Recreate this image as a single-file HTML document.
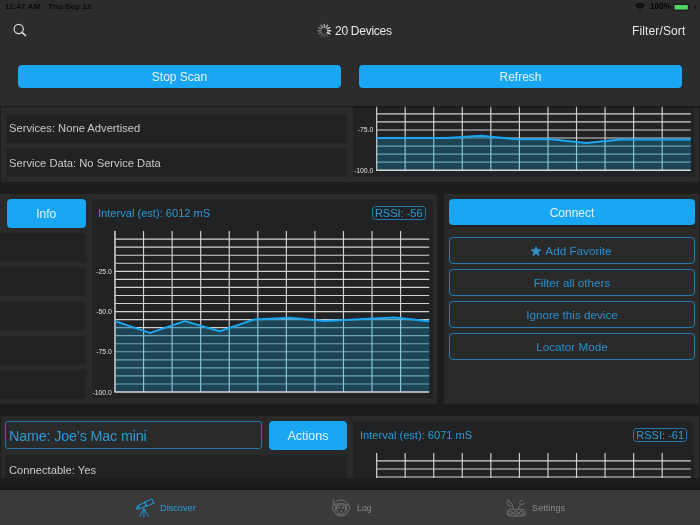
<!DOCTYPE html>
<html><head><meta charset="utf-8"><style>
*{margin:0;padding:0;box-sizing:border-box}
html,body{width:700px;height:525px;overflow:hidden;background:#1d1d1e;font-family:"Liberation Sans",sans-serif}
.a{position:absolute}
.btn{position:absolute;background:#19a6f3;border-radius:4px;box-shadow:0 0 1px rgba(0,0,0,.6);color:#e4f4ff;text-align:center;font-size:12px;will-change:transform}
.ob{position:absolute;border:1.5px solid #2a7cb0;border-radius:4px;color:#2b90cc;text-align:center;font-size:11.7px;line-height:26.8px;will-change:transform}
.cell{position:absolute;background:#212224;border-radius:3px}
.t{position:absolute;white-space:nowrap;color:#c9c9c9;will-change:transform}
svg{will-change:transform}
svg text{font-family:"Liberation Sans",sans-serif}
</style></head><body>
<!-- top card -->
<div class="a" style="left:1px;top:-29px;width:698px;height:210.5px;background:#2a2a2a"></div>
<div class="cell" style="left:6px;top:113.8px;width:341px;height:28.8px"></div>
<div class="cell" style="left:6px;top:148px;width:341px;height:29px"></div>
<div class="t" style="left:8.6px;top:122.2px;font-size:11.2px">Services: None Advertised</div>
<div class="t" style="left:8.6px;top:157px;font-size:11.2px">Service Data: No Service Data</div>
<div class="cell" style="left:353.2px;top:-23px;width:340.5px;height:199.5px"></div>
<svg class="a" style="left:0;top:0" width="700" height="525"><clipPath id="c3769"><polygon points="376.60,170.20 376.60,138.10 411.51,138.10 446.42,138.10 481.33,135.70 516.24,139.30 551.16,139.30 586.07,143.00 620.98,139.50 655.89,139.50 690.80,139.50 690.80,170.20"/></clipPath><path d="M376.60 9.30V170.20M405.16 9.30V170.20M433.72 9.30V170.20M462.28 9.30V170.20M490.84 9.30V170.20M519.40 9.30V170.20M547.96 9.30V170.20M576.52 9.30V170.20M605.08 9.30V170.20M633.64 9.30V170.20M662.20 9.30V170.20M376.60 113.88H690.80M376.60 121.93H690.80M376.60 129.97H690.80M376.60 138.02H690.80M376.60 146.06H690.80M376.60 154.11H690.80M376.60 162.16H690.80" stroke="#d2d2d2" stroke-width="1.15" fill="none"/><g clip-path="url(#c3769)"><rect x="374.6" y="9.3" width="318.2" height="162.9" fill="#1d4556"/><path d="M376.60 17.34H690.80M376.60 25.39H690.80M376.60 33.44H690.80M376.60 41.48H690.80M376.60 49.53H690.80M376.60 57.57H690.80M376.60 65.61H690.80M376.60 73.66H690.80M376.60 81.70H690.80M376.60 89.75H690.80M376.60 97.80H690.80M376.60 105.84H690.80M376.60 113.88H690.80M376.60 121.93H690.80M376.60 129.97H690.80M376.60 138.02H690.80M376.60 146.06H690.80M376.60 154.11H690.80M376.60 162.16H690.80" stroke="#6ba2b6" stroke-width="1.15" fill="none"/><path d="M376.60 9.30V170.20M405.16 9.30V170.20M433.72 9.30V170.20M462.28 9.30V170.20M490.84 9.30V170.20M519.40 9.30V170.20M547.96 9.30V170.20M576.52 9.30V170.20M605.08 9.30V170.20M633.64 9.30V170.20M662.20 9.30V170.20" stroke="#8cc6da" stroke-width="1.15" fill="none"/></g><path d="M376.00 170.20H690.80" stroke="#d8d8d8" stroke-width="1.4"/><path d="M376.60 107.00V170.20" stroke="#c4c4c4" stroke-width="1.15"/><polyline points="376.60,138.10 411.51,138.10 446.42,138.10 481.33,135.70 516.24,139.30 551.16,139.30 586.07,143.00 620.98,139.50 655.89,139.50 690.80,139.50" stroke="#1ba6f2" stroke-width="2" fill="none" stroke-linejoin="round"/><text x="373.30" y="52.03" text-anchor="end" font-size="6.8" fill="#e2e2e2">-25.0</text><text x="373.30" y="92.25" text-anchor="end" font-size="6.8" fill="#e2e2e2">-50.0</text><text x="373.30" y="132.48" text-anchor="end" font-size="6.8" fill="#e2e2e2">-75.0</text><text x="373.30" y="172.70" text-anchor="end" font-size="6.8" fill="#e2e2e2">-100.0</text></svg>

<!-- middle card -->
<div class="a" style="left:0;top:193.6px;width:437.2px;height:210.2px;background:#2a2a2a"></div>
<div class="a" style="left:443.7px;top:193.6px;width:255.2px;height:210.2px;background:#2a2a2a"></div>
<div class="btn" style="left:7px;top:198.7px;width:78.5px;height:29px;line-height:30.6px;font-size:12px">Info</div>
<div class="cell" style="left:-4px;top:233px;width:89.5px;height:28.5px"></div>
<div class="cell" style="left:-4px;top:267.3px;width:89.5px;height:28.5px"></div>
<div class="cell" style="left:-4px;top:301.7px;width:89.5px;height:28.5px"></div>
<div class="cell" style="left:-4px;top:336px;width:89.5px;height:28.5px"></div>
<div class="cell" style="left:-4px;top:370px;width:89.5px;height:28.5px"></div>
<div class="cell" style="left:91.8px;top:199.2px;width:341px;height:199px"></div>
<div class="t" style="left:98.3px;top:206.8px;font-size:11.1px;color:#2b9bd8">Interval (est): 6012 mS</div>
<div class="a" style="left:372px;top:205.9px;width:54px;height:14px;border:1.5px solid #2778aa;border-radius:3.5px"></div>
<div class="t" style="left:372.3px;top:207px;width:53.5px;text-align:center;font-size:11px;color:#2b9bd8">RSSI: -56</div>
<svg class="a" style="left:0;top:0" width="700" height="525"><clipPath id="c115231"><polygon points="115.00,392.00 115.00,321.10 149.91,332.90 184.82,321.10 219.73,331.20 254.64,319.40 289.56,317.70 324.47,320.90 359.38,319.30 394.29,317.60 429.20,321.20 429.20,392.00"/></clipPath><path d="M115.00 231.10V392.00M143.56 231.10V392.00M172.12 231.10V392.00M200.68 231.10V392.00M229.24 231.10V392.00M257.80 231.10V392.00M286.36 231.10V392.00M314.92 231.10V392.00M343.48 231.10V392.00M372.04 231.10V392.00M400.60 231.10V392.00M115.00 239.14H429.20M115.00 247.19H429.20M115.00 255.23H429.20M115.00 263.28H429.20M115.00 271.32H429.20M115.00 279.37H429.20M115.00 287.41H429.20M115.00 295.46H429.20M115.00 303.50H429.20M115.00 311.55H429.20M115.00 319.60H429.20M115.00 327.64H429.20M115.00 335.69H429.20M115.00 343.73H429.20M115.00 351.77H429.20M115.00 359.82H429.20M115.00 367.87H429.20M115.00 375.91H429.20M115.00 383.95H429.20" stroke="#d2d2d2" stroke-width="1.15" fill="none"/><g clip-path="url(#c115231)"><rect x="113" y="231.1" width="318.2" height="162.9" fill="#1d4556"/><path d="M115.00 239.14H429.20M115.00 247.19H429.20M115.00 255.23H429.20M115.00 263.28H429.20M115.00 271.32H429.20M115.00 279.37H429.20M115.00 287.41H429.20M115.00 295.46H429.20M115.00 303.50H429.20M115.00 311.55H429.20M115.00 319.60H429.20M115.00 327.64H429.20M115.00 335.69H429.20M115.00 343.73H429.20M115.00 351.77H429.20M115.00 359.82H429.20M115.00 367.87H429.20M115.00 375.91H429.20M115.00 383.95H429.20" stroke="#6ba2b6" stroke-width="1.15" fill="none"/><path d="M115.00 231.10V392.00M143.56 231.10V392.00M172.12 231.10V392.00M200.68 231.10V392.00M229.24 231.10V392.00M257.80 231.10V392.00M286.36 231.10V392.00M314.92 231.10V392.00M343.48 231.10V392.00M372.04 231.10V392.00M400.60 231.10V392.00" stroke="#8cc6da" stroke-width="1.15" fill="none"/></g><path d="M114.40 392.00H429.20" stroke="#d8d8d8" stroke-width="1.4"/><path d="M115.00 231.10V392.00" stroke="#c4c4c4" stroke-width="1.15"/><polyline points="115.00,321.10 149.91,332.90 184.82,321.10 219.73,331.20 254.64,319.40 289.56,317.70 324.47,320.90 359.38,319.30 394.29,317.60 429.20,321.20" stroke="#1ba6f2" stroke-width="2" fill="none" stroke-linejoin="round"/><text x="111.70" y="273.82" text-anchor="end" font-size="6.8" fill="#e2e2e2">-25.0</text><text x="111.70" y="314.05" text-anchor="end" font-size="6.8" fill="#e2e2e2">-50.0</text><text x="111.70" y="354.27" text-anchor="end" font-size="6.8" fill="#e2e2e2">-75.0</text><text x="111.70" y="394.50" text-anchor="end" font-size="6.8" fill="#e2e2e2">-100.0</text></svg>
<div class="btn" style="left:448.5px;top:199px;width:246px;height:26.4px;line-height:28px;box-shadow:0 1px 1.5px rgba(0,0,0,.35)">Connect</div>
<div class="ob" style="left:448.5px;top:237.3px;width:246px;height:27px;padding-left:13px">Add Favorite</div>
<svg class="a" style="left:0;top:0" width="700" height="525"><polygon points="536.00,245.40 537.53,249.30 541.71,249.55 538.47,252.20 539.53,256.25 536.00,254.00 532.47,256.25 533.53,252.20 530.29,249.55 534.47,249.30" fill="#2b90cc"/></svg>
<div class="ob" style="left:448.5px;top:269.3px;width:246px;height:27px">Filter all others</div>
<div class="ob" style="left:448.5px;top:301.3px;width:246px;height:27px">Ignore this device</div>
<div class="ob" style="left:448.5px;top:333.3px;width:246px;height:27px">Locator Mode</div>

<!-- bottom card -->
<div class="a" style="left:1px;top:415.6px;width:698px;height:62px;background:#2a2a2a"></div>
<div class="a" style="left:5.2px;top:420.6px;width:256.6px;height:28.6px;border:1.6px solid #2677aa;border-radius:3px"></div>
<div class="t" style="left:8.8px;top:427.7px;font-size:14.3px;letter-spacing:-0.14px;color:#2b9bd8">Name: Joe&#8217;s Mac mini</div>
<div class="btn" style="left:269px;top:421px;width:78px;height:28.8px;line-height:30.6px;font-size:12.5px">Actions</div>
<div class="cell" style="left:5.3px;top:455px;width:341.7px;height:30px"></div>
<div class="t" style="left:8.6px;top:464.3px;font-size:11.2px">Connectable: Yes</div>
<div class="cell" style="left:353.3px;top:421.4px;width:340.5px;height:60px"></div>
<div class="t" style="left:359.7px;top:429px;font-size:11.1px;color:#2b9bd8">Interval (est): 6071 mS</div>
<div class="a" style="left:633.1px;top:427.6px;width:54.4px;height:14.3px;border:1.5px solid #2778aa;border-radius:3.5px"></div>
<div class="t" style="left:633.1px;top:428.8px;width:54.4px;text-align:center;font-size:11px;color:#2b9bd8">RSSI: -61</div>
<svg class="a" style="left:0;top:0;clip-path:inset(0 0 47.5px 0)" width="700" height="525"><clipPath id="c376452"><polygon points="376.60,613.80 376.60,520.00 411.51,520.00 446.42,520.00 481.33,520.00 516.24,520.00 551.16,520.00 586.07,520.00 620.98,520.00 655.89,520.00 690.80,520.00 690.80,613.80"/></clipPath><path d="M376.60 452.90V613.80M405.16 452.90V613.80M433.72 452.90V613.80M462.28 452.90V613.80M490.84 452.90V613.80M519.40 452.90V613.80M547.96 452.90V613.80M576.52 452.90V613.80M605.08 452.90V613.80M633.64 452.90V613.80M662.20 452.90V613.80M376.60 460.94H690.80M376.60 468.99H690.80M376.60 477.03H690.80M376.60 485.08H690.80M376.60 493.12H690.80M376.60 501.17H690.80M376.60 509.21H690.80M376.60 517.26H690.80M376.60 525.30H690.80M376.60 533.35H690.80M376.60 541.39H690.80M376.60 549.44H690.80M376.60 557.49H690.80M376.60 565.53H690.80M376.60 573.57H690.80M376.60 581.62H690.80M376.60 589.66H690.80M376.60 597.71H690.80M376.60 605.75H690.80" stroke="#d2d2d2" stroke-width="1.15" fill="none"/><g clip-path="url(#c376452)"><rect x="374.6" y="452.9" width="318.2" height="162.9" fill="#1d4556"/><path d="M376.60 460.94H690.80M376.60 468.99H690.80M376.60 477.03H690.80M376.60 485.08H690.80M376.60 493.12H690.80M376.60 501.17H690.80M376.60 509.21H690.80M376.60 517.26H690.80M376.60 525.30H690.80M376.60 533.35H690.80M376.60 541.39H690.80M376.60 549.44H690.80M376.60 557.49H690.80M376.60 565.53H690.80M376.60 573.57H690.80M376.60 581.62H690.80M376.60 589.66H690.80M376.60 597.71H690.80M376.60 605.75H690.80" stroke="#6ba2b6" stroke-width="1.15" fill="none"/><path d="M376.60 452.90V613.80M405.16 452.90V613.80M433.72 452.90V613.80M462.28 452.90V613.80M490.84 452.90V613.80M519.40 452.90V613.80M547.96 452.90V613.80M576.52 452.90V613.80M605.08 452.90V613.80M633.64 452.90V613.80M662.20 452.90V613.80" stroke="#8cc6da" stroke-width="1.15" fill="none"/></g><path d="M376.00 613.80H690.80" stroke="#d8d8d8" stroke-width="1.4"/><path d="M376.60 452.90V613.80" stroke="#c4c4c4" stroke-width="1.15"/><polyline points="376.60,520.00 411.51,520.00 446.42,520.00 481.33,520.00 516.24,520.00 551.16,520.00 586.07,520.00 620.98,520.00 655.89,520.00 690.80,520.00" stroke="#1ba6f2" stroke-width="2" fill="none" stroke-linejoin="round"/></svg>
<div class="a" style="left:0;top:477.6px;width:700px;height:13px;background:linear-gradient(#1d1d1e 40%,#131313)"></div>

<!-- nav bar -->
<div class="a" style="left:0;top:0;width:700px;height:106.3px;background:#2c2c2c"></div>
<div class="a" style="left:0;top:105.8px;width:700px;height:2.6px;background:linear-gradient(#161616,rgba(22,22,22,0))"></div>
<div class="a" style="left:0;top:47.6px;width:700px;height:1px;background:#282828"></div>
<div class="t" style="left:5px;top:2.2px;letter-spacing:0.05px;font-size:8.1px;font-weight:bold;color:#0a0a0a">11:47 AM</div>
<div class="t" style="left:47.8px;top:2.2px;font-size:8.1px;font-weight:bold;color:#0a0a0a">Thu Sep 12</div>
<div class="t" style="left:649.5px;top:2.3px;font-size:8.2px;font-weight:bold;color:#000">100%</div>
<svg class="a" style="left:0;top:0" width="700" height="48">
  <path d="M635.3 6 Q640 1.5 644.7 6" stroke="#000" stroke-width="1.5" fill="none"/>
  <path d="M637 7.6 Q640 4.8 643 7.6" stroke="#000" stroke-width="1.4" fill="none"/>
  <path d="M638.6 9.1 L640 10.3 L641.4 9.1 Q640 7.9 638.6 9.1Z" fill="#111"/>
  <rect x="673.6" y="4.1" width="15.2" height="6.2" rx="1.2" fill="none" stroke="#161616" stroke-width="0.9"/>
  <rect x="674.6" y="5" width="13.2" height="4.4" rx="0.5" fill="#4cd964"/>
  <path d="M689.3 5.8 Q690.6 7.2 689.3 8.6Z" fill="#161616"/>
  <path d="M695.9 3.8 L693.3 7.7 H695 L694.1 10.8 L696.9 6.6 H695.2Z" fill="#141414"/>
  <circle cx="18.7" cy="29" r="4.6" stroke="#dcdcdc" stroke-width="1.2" fill="none"/>
  <path d="M22 32.3 L25.4 35.5" stroke="#dcdcdc" stroke-width="1.7" stroke-linecap="round"/>
  <g stroke="#e4e4e4" stroke-width="1.45" stroke-linecap="round"><path d="M327.33 32.45L329.76 33.85" opacity="1.00"/><path d="M327.80 30.70L330.60 30.70" opacity="0.92"/><path d="M327.33 28.95L329.76 27.55" opacity="0.83"/><path d="M326.05 27.67L327.45 25.24" opacity="0.74"/><path d="M324.30 27.20L324.30 24.40" opacity="0.66"/><path d="M322.55 27.67L321.15 25.24" opacity="0.57"/><path d="M321.27 28.95L318.84 27.55" opacity="0.49"/><path d="M320.80 30.70L318.00 30.70" opacity="0.40"/><path d="M321.27 32.45L318.84 33.85" opacity="0.32"/><path d="M322.55 33.73L321.15 36.16" opacity="0.23"/><path d="M324.30 34.20L324.30 37.00" opacity="0.22"/><path d="M326.05 33.73L327.45 36.16" opacity="0.22"/></g>
</svg>
<div class="t" style="left:334.6px;top:24px;font-size:12px;letter-spacing:-0.27px;color:#e8e8e8">20 Devices</div>
<div class="t" style="left:632px;top:24px;font-size:12px;letter-spacing:0.13px;color:#e8e8e8">Filter/Sort</div>
<div class="btn" style="left:18px;top:65.1px;width:323px;height:23.4px;line-height:25px">Stop Scan</div>
<div class="btn" style="left:358.9px;top:65.1px;width:323px;height:23.4px;line-height:25px">Refresh</div>

<!-- tab bar -->
<div class="a" style="left:0;top:490px;width:700px;height:35px;background:#3a3a3a"></div>
<svg class="a" style="left:0;top:0" width="700" height="525">
 <g fill="none" stroke="#1f9ad8" stroke-width="1" stroke-linejoin="round">
  <g transform="translate(144.6 504.7) rotate(-24)">
   <rect x="-8.8" y="-1.3" width="2.6" height="2.6"/>
   <rect x="-6.2" y="-1.8" width="7.4" height="3.6"/>
   <rect x="1.2" y="-2.4" width="7.8" height="4.8"/>
  </g>
  <path d="M143.9 508.4 L139.4 517 M143.9 508.4 L143.9 517.4 M143.9 508.4 L148.6 517"/>
 </g>
 <g fill="none" stroke="#6c6c6c" stroke-width="1" stroke-linecap="round">
  <path d="M333.8 504.05 A8.3 8.3 0 0 1 348.2 504.05"/>
  <path d="M335.4 504.4 Q341 502.6 346.6 504.4"/>
  <path d="M333.3 499.2 V504.6"/>
  <rect x="332.6" y="505" width="3" height="6" rx="1.2"/>
  <rect x="346.6" y="505" width="3" height="5.8" rx="1.2"/>
  <path d="M336.4 505.8 Q341 503.8 345.8 505.8 Q346.2 511 343.6 513.2 Q341 514.6 338.4 513.2 Q336 511 336.4 505.8Z"/>
  <path d="M334 511.8 Q341 519.4 348.3 511.8"/>
  <path d="M335.6 513.8 Q341 518.6 346.6 513.8"/>
 </g>
 <g fill="#707070"><ellipse cx="338.7" cy="507.6" rx="1.4" ry="0.9"/><ellipse cx="343.2" cy="507.6" rx="1.4" ry="0.9"/><circle cx="341.2" cy="511" r="0.9"/></g>
 <g fill="none" stroke="#6c6c6c" stroke-width="1" stroke-linecap="round" stroke-linejoin="round">
  <rect x="506.8" y="509.3" width="18.6" height="6.8" rx="3.4"/>
  <circle cx="510.2" cy="513.2" r="2.2"/><circle cx="515.9" cy="513.2" r="2.2"/><circle cx="521.6" cy="513.2" r="2.2"/>
  <path d="M507.9 500.5 A3.2 3.2 0 0 0 512.5 505.1 Z"/>
  <path d="M507.3 499.9 L510.4 503"/>
  <path d="M512.4 505.4 L513.5 509.2 M518.6 509.2 L519 506.4 L520.4 504.6"/>
  <path d="M524 503 A2.2 2.2 0 1 1 522.2 500.4"/>
 </g>
 <g fill="#6c6c6c"><circle cx="510.2" cy="513.2" r="0.7"/><circle cx="515.9" cy="513.2" r="0.7"/><circle cx="521.6" cy="513.2" r="0.7"/></g>
</svg>
<div class="t" style="left:160px;top:502.8px;font-size:9.2px;color:#2b9bd8">Discover</div>
<div class="t" style="left:356.5px;top:502.5px;font-size:8.8px;color:#8a8a8a">Log</div>
<div class="t" style="left:531.6px;top:502.5px;font-size:9.2px;color:#8a8a8a">Settings</div>
</body></html>
